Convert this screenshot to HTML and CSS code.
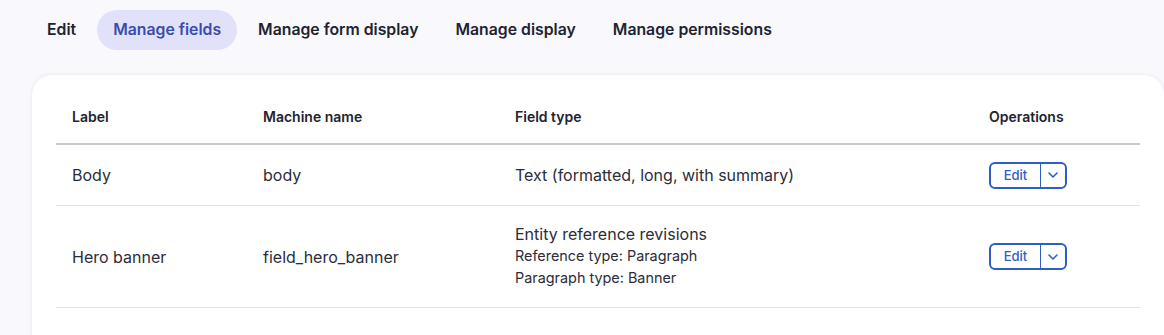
FILE: index.html
```html
<!DOCTYPE html>
<html lang="en">
<head>
    <meta charset="UTF-8">
    <meta name="viewport" content="width=device-width, initial-scale=1.0">
    <title>Manage fields</title>
    <link rel="stylesheet" href="styles.css">
</head>
<body>
    <nav class="tabs">
        <a href="#" class="tab">Edit</a>
        <a href="#" class="tab is-active">Manage fields</a>
        <a href="#" class="tab">Manage form display</a>
        <a href="#" class="tab">Manage display</a>
        <a href="#" class="tab">Manage permissions</a>
    </nav>

    <main>
        <div class="card">
            <table class="field-table">
                <thead>
                    <tr>
                        <th class="col-label">Label</th>
                        <th class="col-machine">Machine name</th>
                        <th class="col-type">Field type</th>
                        <th class="col-ops">Operations</th>
                    </tr>
                </thead>
                <tbody>
                    <tr>
                        <td>Body</td>
                        <td>body</td>
                        <td>Text (formatted, long, with summary)</td>
                        <td class="ops">
                            <div class="dropbutton">
                                <a href="#" class="dropbutton-action">Edit</a>
                                <button class="dropbutton-toggle" aria-label="More operations">
                                    <svg width="12" height="8" viewBox="0 0 12 8"><path d="M2 2l4 4 4-4" fill="none" stroke="currentColor" stroke-width="1.6" stroke-linecap="round" stroke-linejoin="round"/></svg>
                                </button>
                            </div>
                        </td>
                    </tr>
                    <tr>
                        <td>Hero banner</td>
                        <td>field_hero_banner</td>
                        <td>
                            <div class="field-name">Entity reference revisions</div>
                            <div class="field-meta">Reference type: Paragraph</div>
                            <div class="field-meta">Paragraph type: Banner</div>
                        </td>
                        <td class="ops">
                            <div class="dropbutton">
                                <a href="#" class="dropbutton-action">Edit</a>
                                <button class="dropbutton-toggle" aria-label="More operations">
                                    <svg width="12" height="8" viewBox="0 0 12 8"><path d="M2 2l4 4 4-4" fill="none" stroke="currentColor" stroke-width="1.6" stroke-linecap="round" stroke-linejoin="round"/></svg>
                                </button>
                            </div>
                        </td>
                    </tr>
                </tbody>
            </table>
        </div>
    </main>
</body>
</html>
```

FILE: styles.css
```css
/* General */
body {
    font-family: 'Inter', 'Liberation Sans', sans-serif;
    margin: 0;
    padding: 10px 0 0;
    background-color: #f8f8fd;
    color: #222330;
}

a {
    text-decoration: none;
    color: inherit;
}

/* Tabs */
.tabs {
    display: flex;
    gap: 5px;
    padding-left: 31px;
}

.tab {
    display: block;
    height: 40px;
    line-height: 40px;
    padding: 0 16px;
    border-radius: 20px;
    font-size: 15.8px;
    font-weight: 600;
    color: #222330;
}

.tab.is-active {
    background-color: #e1e1fa;
    color: #3a4cad;
}

/* Card */
main {
    padding: 25px 0 0 32px;
}

.card {
    background-color: #fff;
    border-radius: 20px 20px 0 0;
    padding: 16px 24px 30px;
    box-shadow: 0 0 4px rgba(30, 30, 80, 0.08);
    min-height: 230px;
}

/* Table */
.field-table {
    width: 1084px;
    border-collapse: collapse;
}

.field-table th,
.field-table td {
    text-align: left;
    padding: 18px 16px;
    vertical-align: middle;
}

.field-table th {
    font-size: 14px;
    font-weight: 600;
    line-height: 20px;
    padding-top: 16px;
    padding-bottom: 16px;
    border-bottom: 2px solid #c9c9cc;
}

.field-table td {
    font-size: 16px;
    line-height: 24px;
    color: #2c2d38;
    border-bottom: 1px solid #e3e3e6;
}

.field-table td.ops {
    padding-top: 16px;
    padding-bottom: 16px;
}

.col-label { width: 159px; }
.col-machine { width: 220px; }
.col-type { width: 442px; }

.field-name {
    line-height: 20px;
    margin-bottom: 1px;
}

.field-meta {
    font-size: 14.4px;
    line-height: 22px;
}

/* Dropbutton */
.dropbutton {
    display: flex;
    width: fit-content;
    height: 27px;
    border: 2px solid #2f5ec4;
    border-radius: 6px;
    box-sizing: border-box;
    color: #2f5ec4;
}

.dropbutton-action {
    width: 49px;
    text-align: center;
    font-size: 13px;
    line-height: 23px;
    font-weight: 500;
    border-right: 1px solid #2f5ec4;
}

.dropbutton-toggle {
    width: 24px;
    padding: 0;
    border: none;
    background: none;
    color: #2f5ec4;
    display: flex;
    align-items: center;
    justify-content: center;
    cursor: pointer;
}
```
